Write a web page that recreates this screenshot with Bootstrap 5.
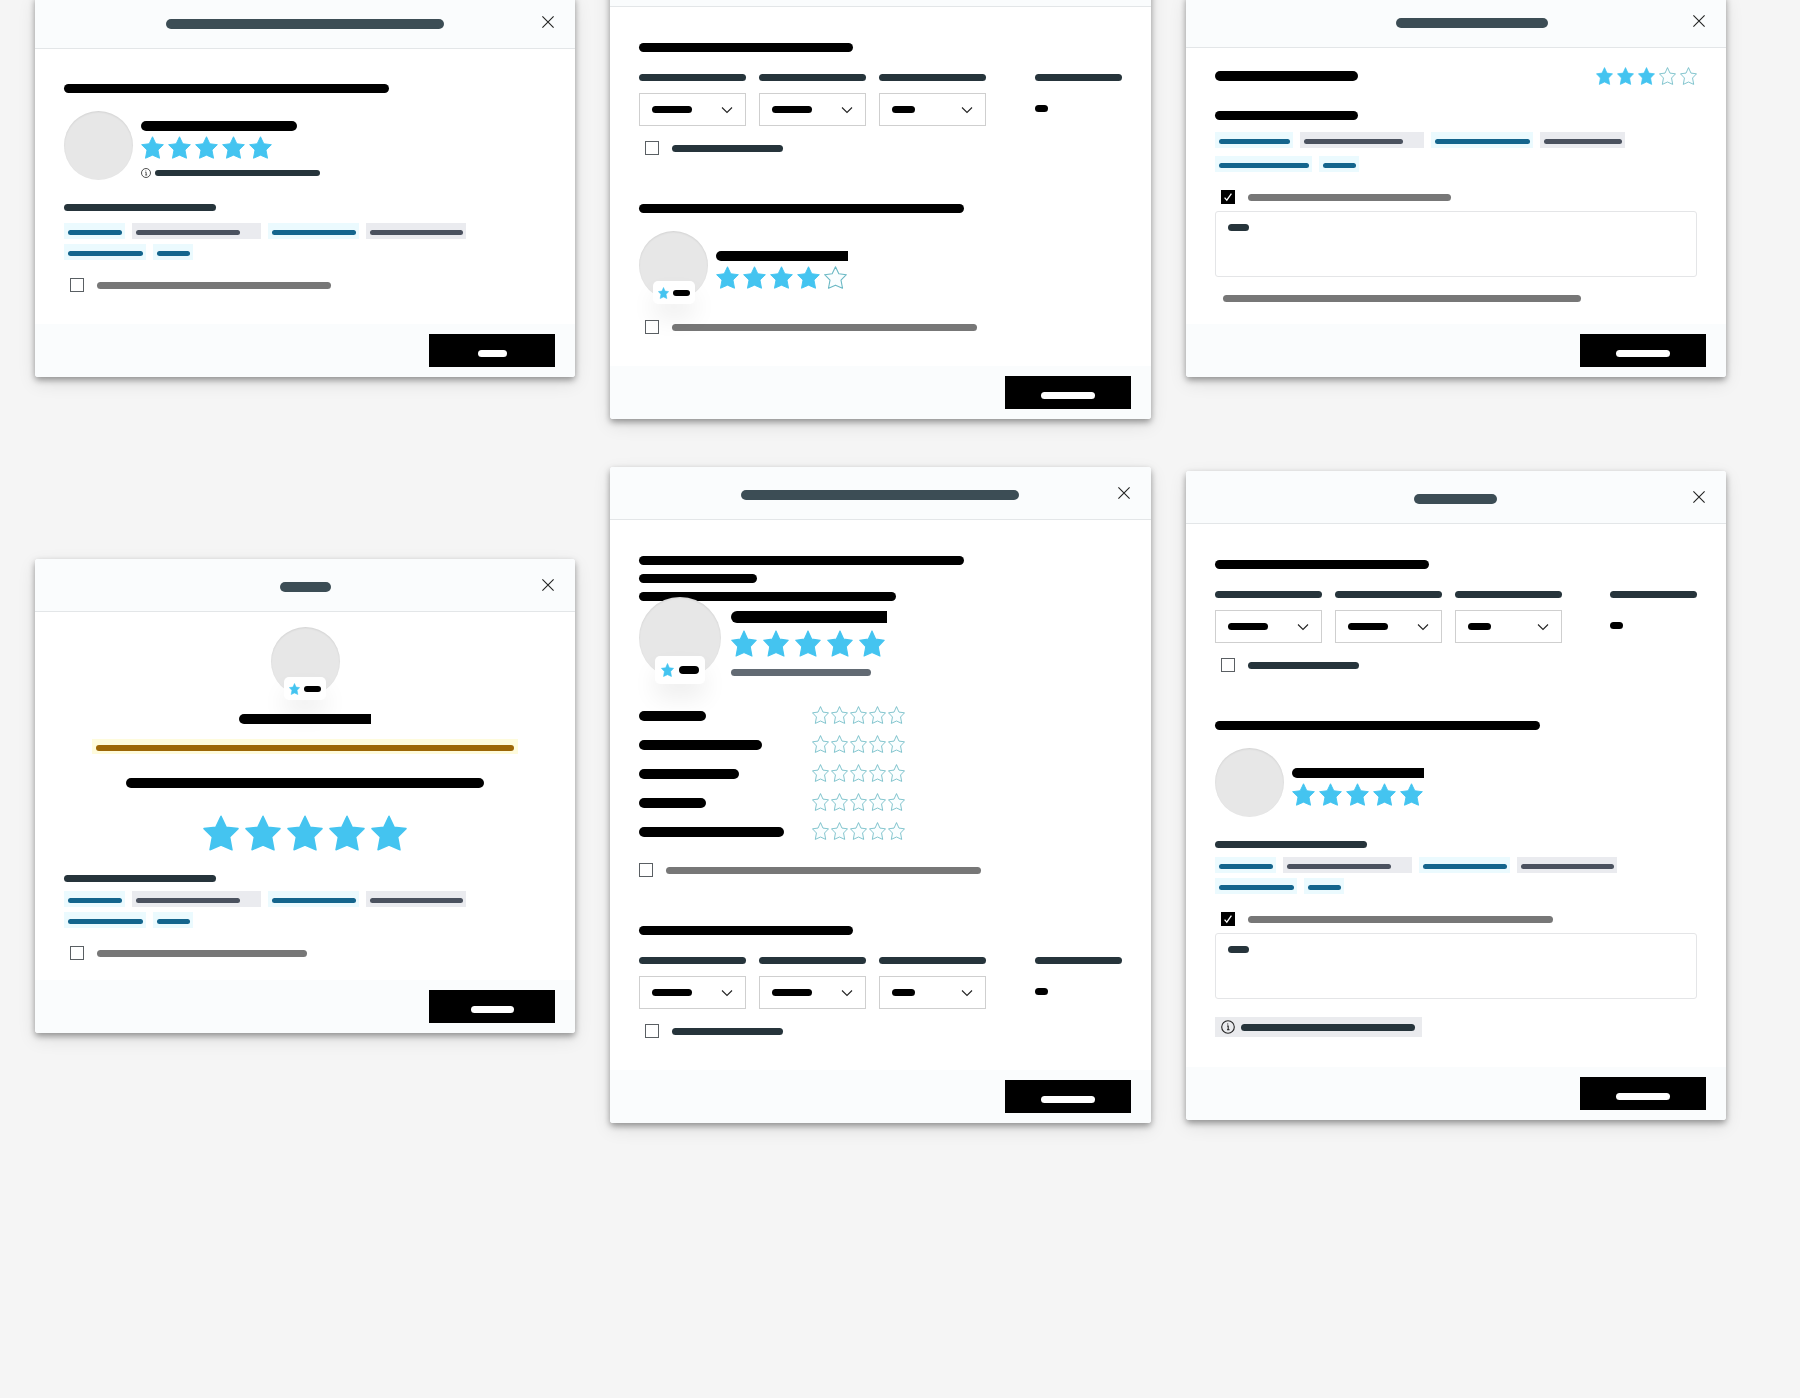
<!DOCTYPE html>
<html lang="en">
<head>
<meta charset="utf-8">
<meta name="viewport" content="width=device-width, initial-scale=1">
<title>Review dialogs</title>
<link href="https://cdn.jsdelivr.net/npm/bootstrap@5.3.0/dist/css/bootstrap.min.css" rel="stylesheet">
<style>
  body { background: #f5f5f5; font-family: "Liberation Sans", sans-serif; }
  .board { display: flex; gap: 35px; padding: 0 74px 80px 35px; overflow: hidden; align-items: flex-start; min-height: 100vh; }
  .lane { flex: 1 1 0; min-width: 0; display: flex; flex-direction: column; }
  .lane-a { margin-top: -4px; gap: 182px; }
  .lane-b { margin-top: -46px; gap: 48px; }
  .lane-c { margin-top: -5px; gap: 94px; }

  /* dialog shell */
  .dialog { background: #fff; border-radius: 3px; box-shadow: 0 3px 6px rgba(0,0,0,.36), 0 6px 18px rgba(0,0,0,.1); }
  .dialog-top { height: 53px; background: #fafcfd; border-bottom: 1px solid #e3e6e8; border-radius: 3px 3px 0 0; display: grid; grid-template-columns: 41px 1fr 41px; align-items: center; }
  .dialog-top .bar { margin: 4px auto 0; background: #3c4d55; }
  .dialog-top .shifted { translate: 16px; }
  .dialog-close { border: 0; padding: 0; background: none; width: 28px; height: 28px; display: grid; place-items: center; }
  .dialog-main { padding: 36px 29px 32px; }
  .dialog-foot { height: 53px; background: #fafcfd; border-radius: 0 0 3px 3px; padding: 10px 20px; display: flex; justify-content: flex-end; }
  .btn-send { width: 126px; height: 33px; background: #000; border: 0; border-radius: 0; padding: 5px 0 0; display: grid; place-items: center; }
  .btn-send .bar { background: #fff; }
  .btn-send:hover { background: #222; }

  /* redacted text lines */
  .bar { display: block; height: 7px; border-radius: 5px; background: #000; max-width: 100%; flex: none; }
  .bar-6 { height: 6px; } .bar-9 { height: 9px; } .bar-10 { height: 10px; } .bar-12 { height: 12px; border-radius: 6px; }
  .cut { border-top-right-radius: 0; border-bottom-right-radius: 0; }
  .ink { background: #26343b; }
  .dim { background: #777; }
  .slate { background: #626a73; }
  .w13 { width: 13px; } .w17 { width: 17px; } .w21 { width: 21px; } .w23 { width: 23px; } .w29 { width: 29px; }
  .w33 { width: 33px; } .w40 { width: 40px; } .w43 { width: 43px; } .w51 { width: 51px; } .w54 { width: 54px; }
  .w67 { width: 67px; } .w71 { width: 71px; } .w75 { width: 75px; } .w78 { width: 78px; } .w83 { width: 83px; } .w84 { width: 84px; } .w87 { width: 87px; }
  .w90 { width: 90px; } .w93 { width: 93px; } .w95 { width: 95px; } .w99 { width: 99px; } .w100px { width: 100px; } .w104 { width: 104px; } .w107 { width: 107px; }
  .w111 { width: 111px; } .w118 { width: 118px; } .w123 { width: 123px; } .w132 { width: 132px; } .w140 { width: 140px; } .w143 { width: 143px; } .w145 { width: 145px; }
  .w152 { width: 152px; } .w156 { width: 156px; } .w165 { width: 165px; } .w174 { width: 174px; } .w203 { width: 203px; } .w210 { width: 210px; } .w214 { width: 214px; }
  .w234 { width: 234px; } .w257 { width: 257px; } .w278 { width: 278px; } .w305 { width: 305px; } .w315 { width: 315px; } .w325 { width: 325px; } .w358 { width: 358px; } .w418 { width: 418px; }

  /* vertical rhythm */
  .t5 { margin-top: 5px; } .t7 { margin-top: 7px; } .t9 { margin-top: 9px; } .t12 { margin-top: 12px; } .t15 { margin-top: 15px; } .t18 { margin-top: 18px; }
  .t20 { margin-top: 20px; } .t22 { margin-top: 22px; } .t24 { margin-top: 24px; } .t27 { margin-top: 27px; } .t49 { margin-top: 49px; }
  .main-close { padding-top: 19px; padding-bottom: 22px; }
  .main-center { padding-top: 15px; padding-bottom: 20px; }
  .main-note { padding-bottom: 30px; }
  .main-person { padding-top: 35px; }

  /* stars */
  .stars { display: flex; gap: 4px; }
  .stars svg { width: 23px; height: 23px; }
  .stars-sm { gap: 4px; } .stars-sm svg { width: 17px; height: 18px; margin-bottom: -1px; }
  .score-row .stars-sm { gap: 2px; }
  .stars-md { gap: 6px; } .stars-md svg { width: 26px; height: 27px; }
  .stars-lg { gap: 6px; } .stars-lg svg { width: 36px; height: 36px; }
  .on { fill: #44c4f0; stroke: #44c4f0; stroke-width: 1.5; stroke-linejoin: round; }
  .off { fill: #fafeff; stroke: #6ab8c4; stroke-width: 1.7; stroke-linejoin: round; }
  .line-icon { fill: none; stroke: #222; stroke-width: 1.1; display: block; flex: none; }

  /* person */
  .person { display: flex; gap: 8px; }
  .person-info { padding-top: 20px; }
  .person-info-high { padding-top: 10px; }
  .person-big { position: relative; margin-top: -4px; gap: 10px; }
  .person-big .person-info { padding-top: 14px; }
  .avatar { position: relative; width: 69px; height: 69px; border-radius: 50%; background: #e7e7e7; box-shadow: inset 0 1px 2px rgba(0,0,0,.09); flex: none; }
  .avatar-lg { width: 82px; height: 82px; }
  .score { position: absolute; left: 50%; bottom: -4px; transform: translateX(-50%); width: 42px; height: 23px; border-radius: 5px; background: #fff; box-shadow: 0 14px 24px rgba(0,0,0,.07); display: flex; align-items: center; justify-content: center; gap: 4px; }
  .score svg { width: 11px; height: 12px; }
  .avatar-lg .score { width: 50px; height: 28px; bottom: -5px; gap: 5px; }
  .avatar-lg .score svg { width: 13px; height: 14px; }
  .avatar-lg .score .bar { width: 20px; height: 8px; }

  /* chips */
  .chips { display: flex; gap: 7px; }
  .chip { height: 16px; padding: 7px 3px 0 4px; background: #ebfafe; }
  .chip .bar { height: 5px; background: #14658d; }
  .chip-off { background: #eaebef; }
  .chip-off .bar { background: #4b525f; }
  .chip-wide { padding-right: 21px; }
  .chips + .chips { margin-top: 5px; }
  .chips-loose + .chips-loose { margin-top: 8px; }
  .notice { background: #fefbdc; height: 15px; padding: 6px 4px 0; }
  .notice .bar { background: #9c6606; }
  .info-box { display: inline-flex; align-items: center; gap: 6px; height: 20px; padding: 0 7px 0 6px; background: #eaebee; }

  /* form parts */
  .tick { display: flex; align-items: center; gap: 13px; height: 14px; padding-left: 6px; }
  .tick-flush { padding-left: 0; }
  .tick .form-check-input { width: 14px; height: 14px; margin: 0; border: 1px solid #5a5f63; border-radius: 0; flex: none; }
  .tick .form-check-input:checked { background-color: #000; border-color: #000; background-size: 12px 12px; background-image: url("data:image/svg+xml,%3Csvg xmlns='http://www.w3.org/2000/svg' viewBox='0 0 12 12'%3E%3Cpath d='M2.6 6.6l2.2 2.5L9.4 2.6' fill='none' stroke='%23fff' stroke-width='1.3'/%3E%3C/svg%3E"); }
  .fields { display: flex; gap: 13px; }
  .field-total { margin-left: auto; }
  .field-total .bar + .bar { margin-top: 24px; }
  .pick { position: relative; margin-top: 12px; }
  .pick .form-select { width: 107px; height: 33px; border: 1px solid #cfcfcf; border-radius: 0; padding: 0 30px 0 13px; background-size: 12px 12px; background-position: right 12px center; background-image: url("data:image/svg+xml,%3Csvg xmlns='http://www.w3.org/2000/svg' viewBox='0 0 12 12'%3E%3Cpath d='M1 3.5l5 5 5-5' fill='none' stroke='%23222' stroke-width='1.1'/%3E%3C/svg%3E"); }
  .pick .bar, .note .bar { position: absolute; left: 13px; top: 13px; pointer-events: none; }
  .note { position: relative; margin-top: 7px; }
  .note .form-control { height: 66px; min-height: 0; border: 1px solid #e4e5e7; border-radius: 3px; resize: none; display: block; }
  .score-row { display: grid; grid-template-columns: 173px 1fr; align-items: center; height: 17px; }
  .score-row + .score-row { margin-top: 12px; }
  .score-row > .bar { margin-top: 2px; }
</style>
<script src="https://cdn.jsdelivr.net/npm/bootstrap@5.3.0/dist/js/bootstrap.bundle.min.js"></script>
</head>
<body>
<svg class="d-none" aria-hidden="true">
  <symbol id="star" viewBox="0 0 36 36" preserveAspectRatio="none"><path d="M18 1.2 23.2 12.2 35 13.6 26.6 22 29 34.8 18 30 7 34.8 9.4 22 1 13.6 12.8 12.2Z"/></symbol>
  <symbol id="cross" viewBox="0 0 12 12"><path d="M.4.4 11.6 11.6M11.6.4.4 11.6"/></symbol>
  <symbol id="info" viewBox="0 0 14 14"><circle cx="7" cy="7" r="6.3"/><path d="M6 6h1.2v3.6M6 9.8h2.6M6.7 3.6v1"/></symbol>
</svg>

<main class="board">

  <div class="lane lane-a">
    <section class="dialog" aria-label="Rating">
      <header class="dialog-top"><span></span><span class="bar bar-10 w278"></span><button class="dialog-close" type="button" aria-label="Close"><svg class="line-icon" width="12" height="12"><use href="#cross"/></svg></button></header>
      <div class="dialog-main main-person">
        <span class="bar bar-9 w325"></span>
        <div class="person t18">
          <div class="avatar"></div>
          <div class="person-info person-info-high">
            <span class="bar bar-10 w156"></span>
            <div class="stars t5" role="img" aria-label="5 of 5"><svg class="on"><use href="#star"/></svg><svg class="on"><use href="#star"/></svg><svg class="on"><use href="#star"/></svg><svg class="on"><use href="#star"/></svg><svg class="on"><use href="#star"/></svg></div>
            <div class="d-flex align-items-center gap-1 t9"><svg class="line-icon" width="10" height="10"><use href="#info"/></svg><span class="bar bar-6 ink w165"></span></div>
          </div>
        </div>
        <span class="bar ink w152 t24"></span>
        <div class="chips t12"><span class="chip"><span class="bar w54"></span></span><span class="chip chip-off chip-wide"><span class="bar w104"></span></span><span class="chip"><span class="bar w84"></span></span><span class="chip chip-off"><span class="bar w93"></span></span></div>
        <div class="chips"><span class="chip"><span class="bar w75"></span></span><span class="chip"><span class="bar w33"></span></span></div>
        <div class="tick t18"><input class="form-check-input" type="checkbox" id="c1" aria-label="Option"><label for="c1"><span class="bar dim w234"></span></label></div>
      </div>
      <footer class="dialog-foot"><button class="btn btn-send" type="button" aria-label="Send"><span class="bar w29"></span></button></footer>
    </section>

    <section class="dialog" aria-label="Rating">
      <header class="dialog-top"><span></span><span class="bar bar-10 w51"></span><button class="dialog-close" type="button" aria-label="Close"><svg class="line-icon" width="12" height="12"><use href="#cross"/></svg></button></header>
      <div class="dialog-main main-center">
        <div class="d-flex flex-column align-items-center">
          <div class="avatar"><div class="score"><svg class="on"><use href="#star"/></svg><span class="bar bar-6 w17"></span></div></div>
          <span class="bar bar-10 cut w132 t18 position-relative"></span>
          <div class="notice t15"><span class="bar bar-6 w418"></span></div>
          <span class="bar bar-10 w358 t24"></span>
          <div class="stars stars-lg t27" role="img" aria-label="5 of 5"><svg class="on"><use href="#star"/></svg><svg class="on"><use href="#star"/></svg><svg class="on"><use href="#star"/></svg><svg class="on"><use href="#star"/></svg><svg class="on"><use href="#star"/></svg></div>
        </div>
        <span class="bar ink w152 t24"></span>
        <div class="chips t9"><span class="chip"><span class="bar w54"></span></span><span class="chip chip-off chip-wide"><span class="bar w104"></span></span><span class="chip"><span class="bar w84"></span></span><span class="chip chip-off"><span class="bar w93"></span></span></div>
        <div class="chips"><span class="chip"><span class="bar w75"></span></span><span class="chip"><span class="bar w33"></span></span></div>
        <div class="tick t18"><input class="form-check-input" type="checkbox" id="c2" aria-label="Option"><label for="c2"><span class="bar dim w210"></span></label></div>
      </div>
      <footer class="dialog-foot"><button class="btn btn-send" type="button" aria-label="Send"><span class="bar w43"></span></button></footer>
    </section>
  </div>

  <div class="lane lane-b">
    <section class="dialog" aria-label="Rating">
      <header class="dialog-top"><span></span><span class="bar bar-10 w278"></span><button class="dialog-close" type="button" aria-label="Close"><svg class="line-icon" width="12" height="12"><use href="#cross"/></svg></button></header>
      <div class="dialog-main">
        <span class="bar bar-9 w214"></span>
        <div class="fields t22">
          <div><label class="bar ink w107" for="s1"></label><div class="pick"><select class="form-select" id="s1" aria-label="First value"></select><span class="bar w40"></span></div></div>
          <div><label class="bar ink w107" for="s2"></label><div class="pick"><select class="form-select" id="s2" aria-label="Second value"></select><span class="bar w40"></span></div></div>
          <div><label class="bar ink w107" for="s3"></label><div class="pick"><select class="form-select" id="s3" aria-label="Third value"></select><span class="bar w23"></span></div></div>
          <div class="field-total"><span class="bar ink w87"></span><span class="bar w13"></span></div>
        </div>
        <div class="tick t15"><input class="form-check-input" type="checkbox" id="c3" aria-label="Option"><label for="c3"><span class="bar ink w111"></span></label></div>
        <span class="bar bar-9 w325 t49"></span>
        <div class="person t18">
          <div class="avatar"><div class="score"><svg class="on"><use href="#star"/></svg><span class="bar bar-6 w17"></span></div></div>
          <div class="person-info">
            <span class="bar bar-10 cut w132"></span>
            <div class="stars t5" role="img" aria-label="4 of 5"><svg class="on"><use href="#star"/></svg><svg class="on"><use href="#star"/></svg><svg class="on"><use href="#star"/></svg><svg class="on"><use href="#star"/></svg><svg class="off"><use href="#star"/></svg></div>
          </div>
        </div>
        <div class="tick t20"><input class="form-check-input" type="checkbox" id="c4" aria-label="Option"><label for="c4"><span class="bar dim w305"></span></label></div>
      </div>
      <footer class="dialog-foot"><button class="btn btn-send" type="button" aria-label="Send"><span class="bar w54"></span></button></footer>
    </section>

    <section class="dialog" aria-label="Rating">
      <header class="dialog-top"><span></span><span class="bar bar-10 w278"></span><button class="dialog-close" type="button" aria-label="Close"><svg class="line-icon" width="12" height="12"><use href="#cross"/></svg></button></header>
      <div class="dialog-main">
        <span class="bar bar-9 w325"></span>
        <span class="bar bar-9 w118 t9"></span>
        <span class="bar bar-9 w257 t9"></span>
        <div class="person person-big">
          <div class="avatar avatar-lg"><div class="score"><svg class="on"><use href="#star"/></svg><span class="bar"></span></div></div>
          <div class="person-info">
            <span class="bar bar-12 cut w156"></span>
            <div class="stars stars-md t7" role="img" aria-label="5 of 5"><svg class="on"><use href="#star"/></svg><svg class="on"><use href="#star"/></svg><svg class="on"><use href="#star"/></svg><svg class="on"><use href="#star"/></svg><svg class="on"><use href="#star"/></svg></div>
            <span class="bar slate w140 t12"></span>
          </div>
        </div>
        <div class="t27 position-relative">
          <div class="score-row"><span class="bar bar-10 w67"></span><div class="stars stars-sm" role="img" aria-label="0 of 5"><svg class="off"><use href="#star"/></svg><svg class="off"><use href="#star"/></svg><svg class="off"><use href="#star"/></svg><svg class="off"><use href="#star"/></svg><svg class="off"><use href="#star"/></svg></div></div>
          <div class="score-row"><span class="bar bar-10 w123"></span><div class="stars stars-sm" role="img" aria-label="0 of 5"><svg class="off"><use href="#star"/></svg><svg class="off"><use href="#star"/></svg><svg class="off"><use href="#star"/></svg><svg class="off"><use href="#star"/></svg><svg class="off"><use href="#star"/></svg></div></div>
          <div class="score-row"><span class="bar bar-10 w100px"></span><div class="stars stars-sm" role="img" aria-label="0 of 5"><svg class="off"><use href="#star"/></svg><svg class="off"><use href="#star"/></svg><svg class="off"><use href="#star"/></svg><svg class="off"><use href="#star"/></svg><svg class="off"><use href="#star"/></svg></div></div>
          <div class="score-row"><span class="bar bar-10 w67"></span><div class="stars stars-sm" role="img" aria-label="0 of 5"><svg class="off"><use href="#star"/></svg><svg class="off"><use href="#star"/></svg><svg class="off"><use href="#star"/></svg><svg class="off"><use href="#star"/></svg><svg class="off"><use href="#star"/></svg></div></div>
          <div class="score-row"><span class="bar bar-10 w145"></span><div class="stars stars-sm" role="img" aria-label="0 of 5"><svg class="off"><use href="#star"/></svg><svg class="off"><use href="#star"/></svg><svg class="off"><use href="#star"/></svg><svg class="off"><use href="#star"/></svg><svg class="off"><use href="#star"/></svg></div></div>
        </div>
        <div class="tick tick-flush t24"><input class="form-check-input" type="checkbox" id="c5" aria-label="Option"><label for="c5"><span class="bar dim w315"></span></label></div>
        <span class="bar bar-9 w214 t49"></span>
        <div class="fields t22">
          <div><label class="bar ink w107" for="s4"></label><div class="pick"><select class="form-select" id="s4" aria-label="First value"></select><span class="bar w40"></span></div></div>
          <div><label class="bar ink w107" for="s5"></label><div class="pick"><select class="form-select" id="s5" aria-label="Second value"></select><span class="bar w40"></span></div></div>
          <div><label class="bar ink w107" for="s6"></label><div class="pick"><select class="form-select" id="s6" aria-label="Third value"></select><span class="bar w23"></span></div></div>
          <div class="field-total"><span class="bar ink w87"></span><span class="bar w13"></span></div>
        </div>
        <div class="tick t15"><input class="form-check-input" type="checkbox" id="c6" aria-label="Option"><label for="c6"><span class="bar ink w111"></span></label></div>
      </div>
      <footer class="dialog-foot"><button class="btn btn-send" type="button" aria-label="Send"><span class="bar w54"></span></button></footer>
    </section>
  </div>

  <div class="lane lane-c">
    <section class="dialog" aria-label="Rating">
      <header class="dialog-top"><span></span><span class="bar bar-10 w152 shifted"></span><button class="dialog-close" type="button" aria-label="Close"><svg class="line-icon" width="12" height="12"><use href="#cross"/></svg></button></header>
      <div class="dialog-main main-close">
        <div class="d-flex justify-content-between align-items-center">
          <span class="bar bar-10 w143"></span>
          <div class="stars stars-sm" role="img" aria-label="3 of 5"><svg class="on"><use href="#star"/></svg><svg class="on"><use href="#star"/></svg><svg class="on"><use href="#star"/></svg><svg class="off"><use href="#star"/></svg><svg class="off"><use href="#star"/></svg></div>
        </div>
        <span class="bar bar-9 w143 t27"></span>
        <div class="chips chips-loose t12"><span class="chip"><span class="bar w71"></span></span><span class="chip chip-off chip-wide"><span class="bar w99"></span></span><span class="chip"><span class="bar w95"></span></span><span class="chip chip-off"><span class="bar w78"></span></span></div>
        <div class="chips chips-loose"><span class="chip"><span class="bar w90"></span></span><span class="chip"><span class="bar w33"></span></span></div>
        <div class="tick t18"><input class="form-check-input" type="checkbox" id="c7" aria-label="Option" checked><label for="c7"><span class="bar dim w203"></span></label></div>
        <div class="note"><textarea class="form-control" aria-label="Comment"></textarea><span class="bar ink w21"></span></div>
        <div class="t18 ps-2"><span class="bar dim w358"></span></div>
      </div>
      <footer class="dialog-foot"><button class="btn btn-send" type="button" aria-label="Send"><span class="bar w54"></span></button></footer>
    </section>

    <section class="dialog" aria-label="Rating">
      <header class="dialog-top"><span></span><span class="bar bar-10 w83"></span><button class="dialog-close" type="button" aria-label="Close"><svg class="line-icon" width="12" height="12"><use href="#cross"/></svg></button></header>
      <div class="dialog-main main-note">
        <span class="bar bar-9 w214"></span>
        <div class="fields t22">
          <div><label class="bar ink w107" for="s7"></label><div class="pick"><select class="form-select" id="s7" aria-label="First value"></select><span class="bar w40"></span></div></div>
          <div><label class="bar ink w107" for="s8"></label><div class="pick"><select class="form-select" id="s8" aria-label="Second value"></select><span class="bar w40"></span></div></div>
          <div><label class="bar ink w107" for="s9"></label><div class="pick"><select class="form-select" id="s9" aria-label="Third value"></select><span class="bar w23"></span></div></div>
          <div class="field-total"><span class="bar ink w87"></span><span class="bar w13"></span></div>
        </div>
        <div class="tick t15"><input class="form-check-input" type="checkbox" id="c8" aria-label="Option"><label for="c8"><span class="bar ink w111"></span></label></div>
        <span class="bar bar-9 w325 t49"></span>
        <div class="person t18">
          <div class="avatar"></div>
          <div class="person-info">
            <span class="bar bar-10 cut w132"></span>
            <div class="stars t5" role="img" aria-label="5 of 5"><svg class="on"><use href="#star"/></svg><svg class="on"><use href="#star"/></svg><svg class="on"><use href="#star"/></svg><svg class="on"><use href="#star"/></svg><svg class="on"><use href="#star"/></svg></div>
          </div>
        </div>
        <span class="bar ink w152 t24"></span>
        <div class="chips t9"><span class="chip"><span class="bar w54"></span></span><span class="chip chip-off chip-wide"><span class="bar w104"></span></span><span class="chip"><span class="bar w84"></span></span><span class="chip chip-off"><span class="bar w93"></span></span></div>
        <div class="chips"><span class="chip"><span class="bar w75"></span></span><span class="chip"><span class="bar w33"></span></span></div>
        <div class="tick t18"><input class="form-check-input" type="checkbox" id="c9" aria-label="Option" checked><label for="c9"><span class="bar dim w305"></span></label></div>
        <div class="note"><textarea class="form-control" aria-label="Comment"></textarea><span class="bar ink w21"></span></div>
        <div class="d-flex t18"><div class="info-box"><svg class="line-icon" width="14" height="14"><use href="#info"/></svg><span class="bar ink w174"></span></div></div>
      </div>
      <footer class="dialog-foot"><button class="btn btn-send" type="button" aria-label="Send"><span class="bar w54"></span></button></footer>
    </section>
  </div>

</main>
</body>
</html>
